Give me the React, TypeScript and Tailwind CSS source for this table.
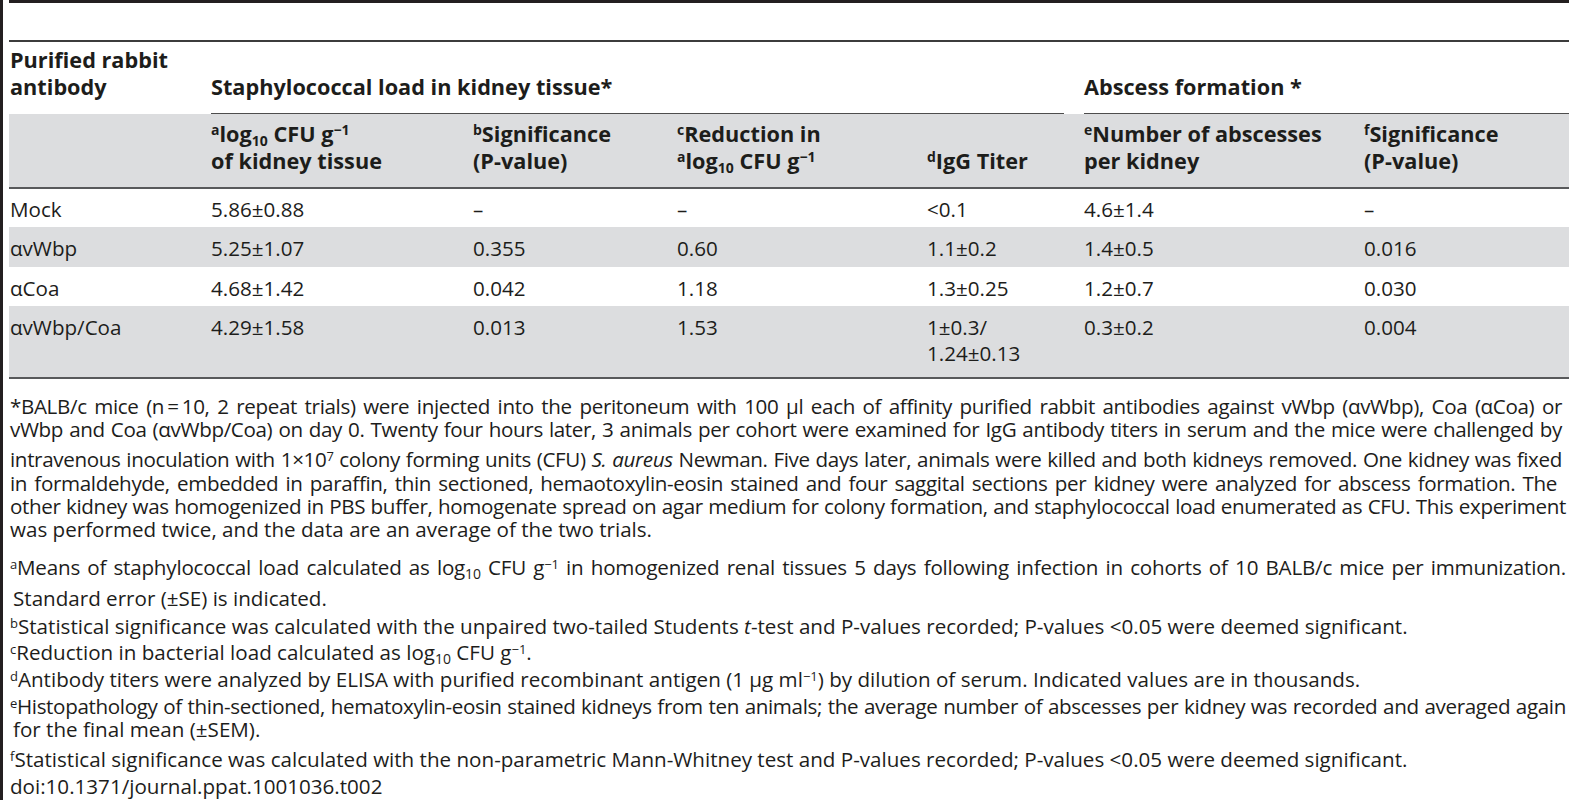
import React from "react";

const Sup = ({ children }: { children: React.ReactNode }) => (
  <sup className="text-[13px] font-normal">{children}</sup>
);
const SupB = ({ children }: { children: React.ReactNode }) => (
  <sup className="text-[14px]">{children}</sup>
);
const SubB = ({ children }: { children: React.ReactNode }) => (
  <sub className="text-[14px]">{children}</sub>
);

const cols = "grid grid-cols-[202px_262px_204px_250px_157px_280px_1fr]";

type Row = { cells: React.ReactNode[]; shaded: boolean; cls: string };

const rows: Row[] = [
  { cells: ["Mock", "5.86±0.88", "–", "–", "<0.1", "4.6±1.4", "–"], shaded: false, cls: "h-[38px] pt-[7px]" },
  { cells: ["αvWbp", "5.25±1.07", "0.355", "0.60", "1.1±0.2", "1.4±0.5", "0.016"], shaded: true, cls: "h-[40px] pt-[8px]" },
  { cells: ["αCoa", "4.68±1.42", "0.042", "1.18", "1.3±0.25", "1.2±0.7", "0.030"], shaded: false, cls: "h-[39px] pt-[8px]" },
  {
    cells: [
      "αvWbp/Coa",
      "4.29±1.58",
      "0.013",
      "1.53",
      <>
        1±0.3/
        <br />
        1.24±0.13
      </>,
      "0.3±0.2",
      "0.004",
    ],
    shaded: true,
    cls: "h-[71px] pt-[8px]",
  },
];

const FULL = "w-[1552px] text-justify [text-align-last:justify] tracking-[-0.35px]";

const notes: { cls: string; content: React.ReactNode }[] = [
  {
    cls: `mt-0 ${FULL}`,
    content: (
      <>*BALB/c mice (n{"\u2009"}={"\u2009"}10, 2 repeat trials) were injected into the peritoneum with 100 μl each of affinity purified rabbit antibodies against vWbp (αvWbp), Coa (αCoa) or</>
    ),
  },
  {
    cls: `mt-0 ${FULL}`,
    content: (
      <>vWbp and Coa (αvWbp/Coa) on day 0. Twenty four hours later, 3 animals per cohort were examined for IgG antibody titers in serum and the mice were challenged by</>
    ),
  },
  {
    cls: `mt-[7px] ${FULL}`,
    content: (
      <>
        intravenous inoculation with 1×10<Sup>7</Sup> colony forming units (CFU) <i>S. aureus</i> Newman. Five days later, animals were killed and both kidneys removed. One kidney was fixed
      </>
    ),
  },
  {
    cls: `mt-[1px] w-[1547px] text-justify [text-align-last:justify] tracking-[-0.35px]`,
    content: (
      <>in formaldehyde, embedded in paraffin, thin sectioned, hemaotoxylin-eosin stained and four saggital sections per kidney were analyzed for abscess formation. The</>
    ),
  },
  {
    cls: `mt-0 w-[1556px] text-justify [text-align-last:justify] tracking-[-0.35px]`,
    content: (
      <>other kidney was homogenized in PBS buffer, homogenate spread on agar medium for colony formation, and staphylococcal load enumerated as CFU. This experiment</>
    ),
  },
  { cls: "mt-0", content: <>was performed twice, and the data are an average of the two trials.</> },
  {
    cls: `mt-[15px] w-[1556px] text-justify [text-align-last:justify] tracking-[-0.2px]`,
    content: (
      <>
        <Sup>a</Sup>Means of staphylococcal load calculated as log<sub className="text-[14px]">10</sub> CFU g<Sup>−1</Sup> in homogenized renal tissues 5 days following infection in cohorts of 10 BALB/c mice per immunization.
      </>
    ),
  },
  { cls: "mt-[8px] pl-[3px]", content: <>Standard error (±SE) is indicated.</> },
  {
    cls: "mt-[5px]",
    content: (
      <>
        <Sup>b</Sup>Statistical significance was calculated with the unpaired two-tailed Students <i>t</i>-test and P-values recorded; P-values {"<"}0.05 were deemed significant.
      </>
    ),
  },
  {
    cls: "mt-[3px]",
    content: (
      <>
        <Sup>c</Sup>Reduction in bacterial load calculated as log<sub className="text-[14px]">10</sub> CFU g<Sup>−1</Sup>.
      </>
    ),
  },
  {
    cls: "mt-[4px]",
    content: (
      <>
        <Sup>d</Sup>Antibody titers were analyzed by ELISA with purified recombinant antigen (1 μg ml<Sup>−1</Sup>) by dilution of serum. Indicated values are in thousands.
      </>
    ),
  },
  {
    cls: `mt-[4px] w-[1556px] text-justify [text-align-last:justify] tracking-[-0.35px]`,
    content: (
      <>
        <Sup>e</Sup>Histopathology of thin-sectioned, hematoxylin-eosin stained kidneys from ten animals; the average number of abscesses per kidney was recorded and averaged again
      </>
    ),
  },
  { cls: "mt-0 pl-[3px]", content: <>for the final mean (±SEM).</> },
  {
    cls: "mt-[7px]",
    content: (
      <>
        <Sup>f</Sup>Statistical significance was calculated with the non-parametric Mann-Whitney test and P-values recorded; P-values {"<"}0.05 were deemed significant.
      </>
    ),
  },
  { cls: "mt-[4px]", content: <>doi:10.1371/journal.ppat.1001036.t002</> },
];

export default function App() {
  return (
    <div className="flex h-[800px] w-[1569px] overflow-hidden bg-white font-['Open_Sans',sans-serif] text-[#1d1d1b]">
      <div className="w-[3px] shrink-0 bg-[#231f20]" />
      <div className="ml-[6px] flex-1">
        <div className="h-[3px] bg-[#231f20]" />
        <div className="h-[37px]" />
        <div className="h-[2px] bg-[#3c3c3c]" />

        {/* header row 1 */}
        <div className={`${cols} h-[72px] items-end text-[21.7px] font-bold leading-[27px]`}>
          <div className="pb-[14px] pl-[1px]">
            Purified rabbit
            <br />
            antibody
          </div>
          <div className="col-span-4 mr-[20px] flex items-end self-stretch border-b border-[#4d4d4d] pb-[13px]">
            Staphylococcal load in kidney tissue*
          </div>
          <div className="col-span-2 flex items-end self-stretch border-b border-[#4d4d4d] pb-[13px]">
            Abscess formation *
          </div>
        </div>

        {/* header row 2 */}
        <div className={`${cols} h-[73px] items-end bg-[#dcdddf] pb-[13px] text-[21.7px] font-bold leading-[27px]`}>
          <div />
          <div>
            <SupB>a</SupB>log<SubB>10</SubB> CFU g<SupB>−1</SupB>
            <br />
            of kidney tissue
          </div>
          <div>
            <SupB>b</SupB>Significance
            <br />
            (P-value)
          </div>
          <div>
            <SupB>c</SupB>Reduction in
            <br />
            <SupB>a</SupB>log<SubB>10</SubB> CFU g<SupB>−1</SupB>
          </div>
          <div>
            <SupB>d</SupB>IgG Titer
          </div>
          <div>
            <SupB>e</SupB>Number of abscesses
            <br />
            per kidney
          </div>
          <div>
            <SupB>f</SupB>Significance
            <br />
            (P-value)
          </div>
        </div>
        <div className="h-[2px] bg-[#58595b]" />

        {/* body rows */}
        {rows.map((r, i) => (
          <div
            key={i}
            className={`${cols} items-start text-[20.6px] leading-[26px] ${r.shaded ? "bg-[#dcdddf]" : "bg-white"} ${r.cls}`}
          >
            {r.cells.map((c, j) => (
              <div key={j} className={j === 0 ? "pl-[1px]" : ""}>
                {c}
              </div>
            ))}
          </div>
        ))}
        <div className="h-[2px] bg-[#58595b]" />

        {/* footnotes */}
        <div className="pt-[16px] pl-[1px] text-[20.6px] leading-[23px]">
          {notes.map((n, i) => (
            <div key={i} className={`whitespace-nowrap ${n.cls}`}>
              {n.content}
            </div>
          ))}
        </div>
      </div>
    </div>
  );
}
